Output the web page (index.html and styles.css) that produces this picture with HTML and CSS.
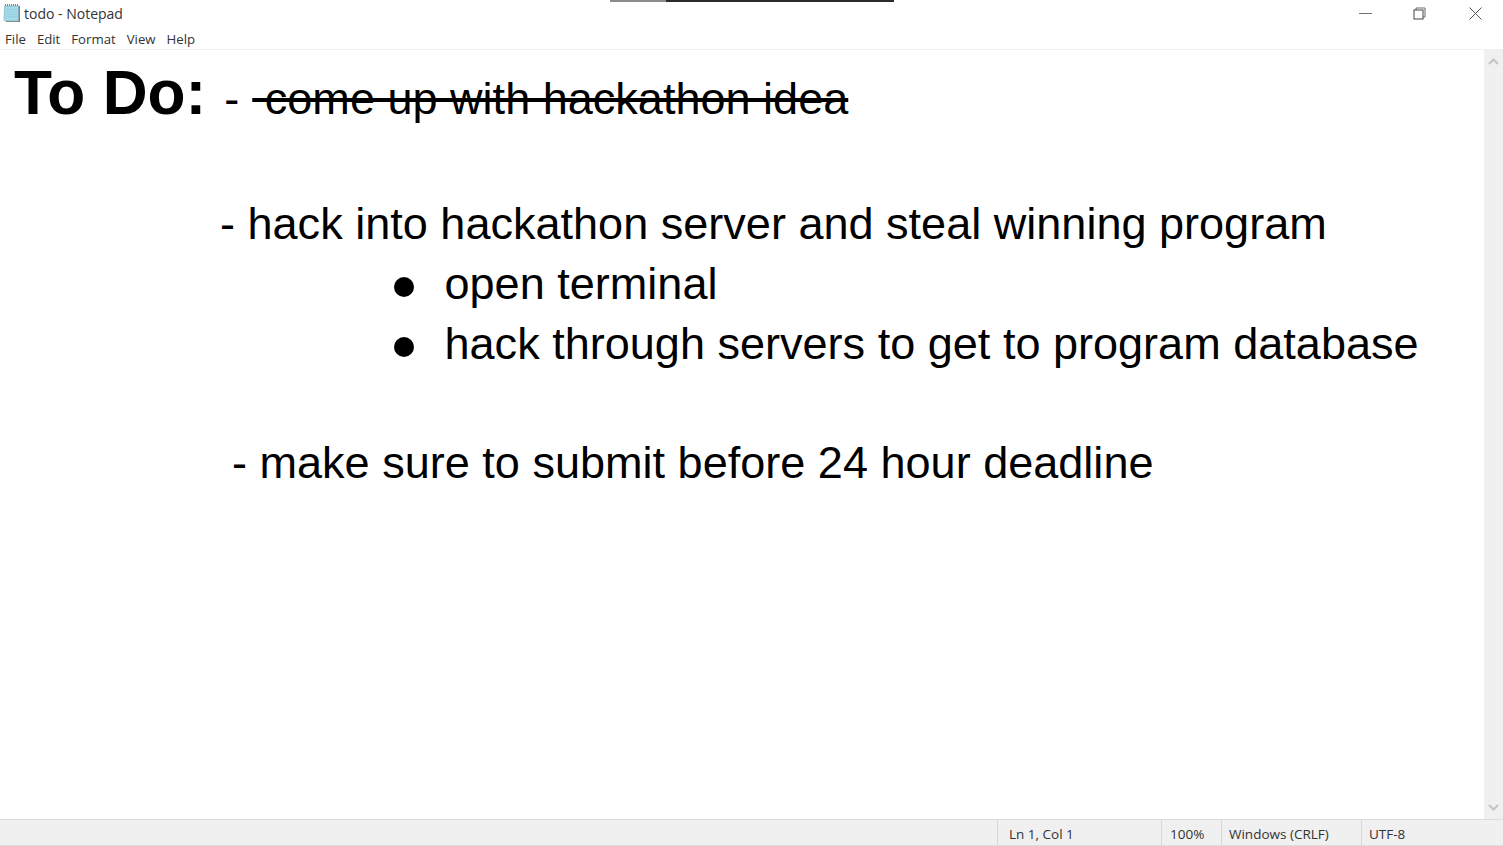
FILE: index.html
```html
<!DOCTYPE html>
<html lang="en">
<head>
    <meta charset="UTF-8">
    <title>todo - Notepad</title>
    <link rel="stylesheet" href="styles.css">
</head>
<body>
    <div class="window">
        <div class="grab-bar"><span class="grab-light"></span><span class="grab-dark"></span></div>
        <header class="titlebar">
            <svg class="app-icon" width="18" height="20" viewBox="0 0 18 20">
                <path d="M4 3H18V19H4Z" fill="#8d8672"/>
                <path d="M2.5 3H16.5V18H3.5Q2 18 2 16.5Z" fill="#a6dbe9" stroke="#7ba7b5" stroke-width="0.6"/>
                <path d="M3.5 6.5H15.5M3.5 9H15.5M3.5 11.5H15.5M3.5 14H15.5" stroke="#8cc7da" stroke-width="0.7"/>
                <path d="M3 2H17" stroke="#7d8488" stroke-width="2" stroke-dasharray="1 1"/>
            </svg>
            <span class="title">todo - Notepad</span>
            <div class="controls">
                <svg class="ctl ctl-min" width="13" height="13" viewBox="0 0 13 13"><path d="M0 6.5H13" stroke="#707070" stroke-width="1"/></svg>
                <svg class="ctl ctl-max" width="13" height="13" viewBox="0 0 13 13"><path d="M3 3V1H12V10H10" fill="none" stroke="#6a6a6a"/><rect x="1" y="3" width="9" height="9" fill="none" stroke="#444"/></svg>
                <svg class="ctl ctl-close" width="13" height="13" viewBox="0 0 13 13"><path d="M0.5 0.5L12.5 12.5M12.5 0.5L0.5 12.5" stroke="#555" stroke-width="1"/></svg>
            </div>
        </header>
        <nav class="menubar">
            <span>File</span>
            <span>Edit</span>
            <span>Format</span>
            <span>View</span>
            <span>Help</span>
        </nav>
        <div class="middle">
            <main class="editor">
                <div class="line line-head">
                    <span class="heading">To Do:</span>
                    <span class="dash">-</span>
                    <span class="struck">&nbsp;come up with hackathon idea</span>
                </div>
                <p class="line task-hack">- hack into hackathon server and steal winning program</p>
                <ul class="steps">
                    <li>open terminal</li>
                    <li>hack through servers to get to program database</li>
                </ul>
                <p class="line task-submit">- make sure to submit before 24 hour deadline</p>
            </main>
            <aside class="scrollbar">
                <svg width="11" height="7" viewBox="0 0 11 7"><path d="M1 6L5.5 1.5L10 6" fill="none" stroke="#c4c4c4" stroke-width="2"/></svg>
                <svg width="11" height="7" viewBox="0 0 11 7"><path d="M1 1L5.5 5.5L10 1" fill="none" stroke="#c4c4c4" stroke-width="2"/></svg>
            </aside>
        </div>
        <footer class="statusbar">
            <span class="cell cell-pos">Ln 1, Col 1</span>
            <span class="cell cell-zoom">100%</span>
            <span class="cell cell-eol">Windows (CRLF)</span>
            <span class="cell cell-enc">UTF-8</span>
        </footer>
    </div>
</body>
</html>
```

FILE: styles.css
```css
html, body {
    margin: 0;
    padding: 0;
    background: #fff;
}
.window {
    position: relative;
    display: flex;
    flex-direction: column;
    width: 1503px;
    height: 846px;
    overflow: hidden;
    font-family: "Open Sans", "Noto Sans", sans-serif;
    color: #1a1a1a;
}
.grab-bar {
    position: absolute;
    top: 0;
    left: 610px;
    display: flex;
    width: 284px;
    height: 2px;
}
.grab-light {
    width: 56px;
    background: #8c8c8c;
}
.grab-dark {
    flex: 1;
    background: #2b2b2b;
}
.titlebar {
    display: flex;
    align-items: center;
    height: 26px;
    padding-left: 2px;
    box-sizing: border-box;
}
.app-icon {
    margin-right: 4px;
}
.title {
    font-size: 14px;
    color: #333;
}
.controls {
    display: flex;
    margin-left: auto;
    padding-right: 21px;
}
.ctl-min {
    margin-right: 41px;
}
.ctl-max {
    margin-right: 43px;
}
.menubar {
    display: flex;
    align-items: center;
    gap: 11px;
    height: 21px;
    padding: 2px 0 0 5px;
    font-size: 13.2px;
    border-bottom: 1px solid #f0f0f0;
    color: #333;
}
.middle {
    display: flex;
    flex: 1;
    min-height: 0;
}
.editor {
    flex: 1;
    min-width: 0;
    font-family: "Liberation Sans", Arial, sans-serif;
    color: #000;
    font-size: 45.05px;
    line-height: 60px;
    white-space: nowrap;
}
.line {
    margin: 0;
}
.line-head {
    display: flex;
    align-items: baseline;
    padding: 13px 0 0 14px;
    height: 60px;
}
.heading {
    font-size: 62.2px;
    font-weight: bold;
    margin-right: 18px;
}
.dash {
    margin-right: 13px;
}
.struck {
    text-decoration: line-through;
}
.task-hack {
    margin-top: 71px;
    padding-left: 220px;
}
.steps {
    list-style: none;
    margin: 0;
    padding: 0 0 0 394px;
}
.steps li {
    display: flex;
    align-items: center;
    height: 60px;
}
.steps li::before {
    content: "";
    width: 20px;
    height: 20px;
    margin: 6px 30.5px 0 0;
    border-radius: 50%;
    background: #000;
}
.task-submit {
    margin-top: 59px;
    padding-left: 232px;
}
.scrollbar {
    display: flex;
    flex-direction: column;
    justify-content: space-between;
    align-items: center;
    width: 19px;
    padding: 8px 0;
    box-sizing: border-box;
    background: #f0f0f0;
}
.statusbar {
    display: flex;
    height: 27px;
    box-sizing: border-box;
    background: #f0f0f0;
    border-top: 1px solid #dcdcdc;
    border-bottom: 1px solid #dcdcdc;
    font-size: 13.5px;
    color: #333;
    line-height: 28px;
    padding-left: 997px;
}
.cell {
    border-left: 1px solid #d8d8d8;
    padding-left: 11px;
    box-sizing: border-box;
}
.cell-pos {
    width: 164px;
}
.cell-zoom {
    width: 60px;
    padding-left: 8px;
}
.cell-eol {
    width: 140px;
    padding-left: 7px;
}
.cell-enc {
    padding-left: 7px;
}
```
